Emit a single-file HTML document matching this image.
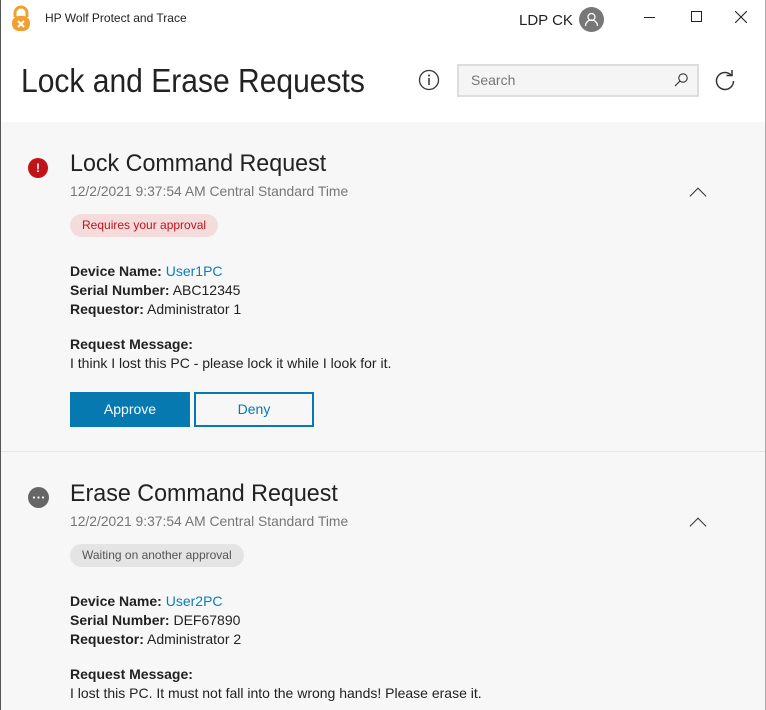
<!DOCTYPE html>
<html><head><style>
*{margin:0;padding:0;box-sizing:border-box}
body{width:766px;height:710px;overflow:hidden;background:#fff;font-family:"Liberation Sans",sans-serif;position:relative;color:#222}
.a{position:absolute;white-space:nowrap}
.content{position:absolute;left:1px;top:122px;width:764px;height:588px;background:#f7f7f7}
.sep{position:absolute;left:1px;top:451px;width:764px;height:1px;background:#e6e6e6}
.t{font-size:24px;color:#222;transform:scaleX(0.97);transform-origin:left}
.d{font-size:14px;color:#767676;transform:scaleX(0.99);transform-origin:left}
.l{font-size:14px;color:#222}
.l b{font-weight:bold}
.pill{height:23px;border-radius:12px;font-size:12px;line-height:23px;padding:0 12px}
.chev{width:12px;height:12px;border-left:1.5px solid #333;border-top:1.5px solid #333;transform:rotate(45deg)}
</style></head><body>
<div style="position:absolute;left:0;top:0;width:1px;height:710px;background:#555"></div>
<div style="position:absolute;right:0;top:0;width:1px;height:710px;background:#aaa"></div>
<svg class="a" style="left:10px;top:5px" width="22" height="27" viewBox="0 0 22 27"><path d="M5 12V8a6 6 0 0 1 12 0v4" stroke="#f0a030" stroke-width="3" fill="none"/><rect x="2" y="11" width="18" height="15" rx="7" fill="#f0a030"/><path d="M8 16l6 6M14 16l-6 6" stroke="#fff" stroke-width="2"/></svg>
<div class="a" style="left:45px;top:11px;font-size:12px">HP Wolf Protect and Trace</div>
<div class="a" style="left:519px;top:12px;font-size:15px">LDP CK</div>
<div class="a" style="left:579px;top:7px;width:25px;height:25px;border-radius:50%;background:#777"></div>
<svg class="a" style="left:579px;top:7px" width="25" height="25"><circle cx="12.5" cy="10" r="3.5" stroke="#fff" stroke-width="1.3" fill="none"/><path d="M6.5 19a6 6 0 0 1 12 0" stroke="#fff" stroke-width="1.3" fill="none"/></svg>
<div class="a" style="left:644px;top:17px;width:11px;height:1px;background:#222"></div>
<div class="a" style="left:691px;top:11px;width:11px;height:11px;border:1px solid #222"></div>
<svg class="a" style="left:735px;top:11px" width="12" height="12"><path d="M0 0L12 12M12 0L0 12" stroke="#222" stroke-width="1.1"/></svg>
<div class="a" style="left:21px;top:62px;font-size:33px;font-weight:300;color:#222;transform:scaleX(0.91);transform-origin:left">Lock and Erase Requests</div>
<svg class="a" style="left:418px;top:69px" width="22" height="22"><circle cx="11" cy="11" r="9.5" stroke="#333" stroke-width="1.3" fill="none"/><path d="M11 9v7" stroke="#333" stroke-width="1.5"/><circle cx="11" cy="6.5" r="1" fill="#333"/></svg>
<div class="a" style="left:457px;top:64px;width:242px;height:33px;border:2px solid #ddd;background:#f5f5f5"></div>
<div class="a" style="left:471px;top:72px;font-size:14px;color:#777">Search</div>
<svg class="a" style="left:673px;top:72px" width="16" height="16"><circle cx="10" cy="6" r="4.2" stroke="#333" stroke-width="1.1" fill="none"/><path d="M7 9L2 14" stroke="#333" stroke-width="1.2"/></svg>
<svg class="a" style="left:713px;top:69px" width="24" height="24"><path d="M18.5 6.5A8.5 8.5 0 1 0 20.5 12" stroke="#333" stroke-width="1.5" fill="none"/><path d="M13.5 6.5h5.5v-5.5" stroke="#333" stroke-width="1.5" fill="none"/></svg>

<div class="content"></div>
<div class="sep"></div>

<div class="a" style="left:28px;top:158px;width:20px;height:20px;border-radius:50%;background:#c0131a;color:#fff;font-size:12px;font-weight:bold;text-align:center;line-height:20px">!</div>
<div class="a t" style="left:70px;top:150px">Lock Command Request</div>
<div class="a d" style="left:70px;top:183px">12/2/2021 9:37:54 AM Central Standard Time</div>
<div class="a chev" style="left:692px;top:190px"></div>
<div class="a pill" style="left:70px;top:214px;background:#f5dcdc;color:#c0131a">Requires your approval</div>
<div class="a l" style="left:70px;top:262px;line-height:19px"><b>Device Name:</b> <span style="color:#0a7dba">User1PC</span><br><b>Serial Number:</b> ABC12345<br><b>Requestor:</b> Administrator 1</div>
<div class="a l" style="left:70px;top:335px;line-height:19px"><b>Request Message:</b><br>I think I lost this PC - please lock it while I look for it.</div>
<div class="a" style="left:70px;top:392px;width:120px;height:35px;background:#0679b0;color:#fff;font-size:14px;text-align:center;line-height:35px">Approve</div>
<div class="a" style="left:194px;top:392px;width:120px;height:35px;border:2px solid #0679b0;color:#0679b0;font-size:14px;text-align:center;line-height:31px">Deny</div>

<svg class="a" style="left:28px;top:487px" width="21" height="21"><circle cx="10.5" cy="10.5" r="10.5" fill="#666"/><circle cx="6" cy="10.5" r="1.1" fill="#fff"/><circle cx="10.5" cy="10.5" r="1.1" fill="#fff"/><circle cx="15" cy="10.5" r="1.1" fill="#fff"/></svg>
<div class="a t" style="left:70px;top:480px">Erase Command Request</div>
<div class="a d" style="left:70px;top:513px">12/2/2021 9:37:54 AM Central Standard Time</div>
<div class="a chev" style="left:692px;top:520px"></div>
<div class="a pill" style="left:70px;top:544px;background:#e4e4e4;color:#555">Waiting on another approval</div>
<div class="a l" style="left:70px;top:592px;line-height:19px"><b>Device Name:</b> <span style="color:#0a7dba">User2PC</span><br><b>Serial Number:</b> DEF67890<br><b>Requestor:</b> Administrator 2</div>
<div class="a l" style="left:70px;top:665px;line-height:19px"><b>Request Message:</b><br>I lost this PC. It must not fall into the wrong hands! Please erase it.</div>
</body></html>
